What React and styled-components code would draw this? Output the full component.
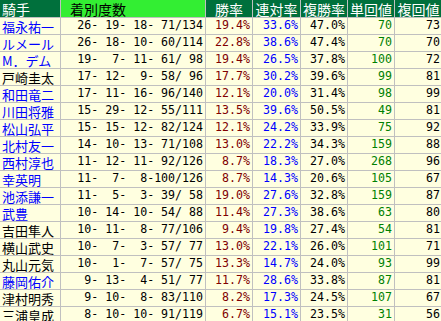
import React from "react";
import styled, { createGlobalStyle } from "styled-components";

const rows = [
  ["福永祐一", true, 26, 19, 18, 71, 134, "19.4", "33.6", "47.0", 70, 73],
  ["ルメール", true, 26, 18, 10, 60, 114, "22.8", "38.6", "47.4", 70, 70],
  ["M．デム", true, 19, 7, 11, 61, 98, "19.4", "26.5", "37.8", 100, 72],
  ["戸崎圭太", false, 17, 12, 9, 58, 96, "17.7", "30.2", "39.6", 99, 81],
  ["和田竜二", true, 17, 11, 16, 96, 140, "12.1", "20.0", "31.4", 98, 99],
  ["川田将雅", true, 15, 29, 12, 55, 111, "13.5", "39.6", "50.5", 49, 81],
  ["松山弘平", true, 15, 15, 12, 82, 124, "12.1", "24.2", "33.9", 75, 92],
  ["北村友一", true, 14, 10, 13, 71, 108, "13.0", "22.2", "34.3", 159, 88],
  ["西村淳也", true, 11, 12, 11, 92, 126, "8.7", "18.3", "27.0", 268, 96],
  ["幸英明", true, 11, 7, 8, 100, 126, "8.7", "14.3", "20.6", 105, 67],
  ["池添謙一", true, 11, 5, 3, 39, 58, "19.0", "27.6", "32.8", 159, 87],
  ["武豊", true, 10, 14, 10, 54, 88, "11.4", "27.3", "38.6", 63, 80],
  ["吉田隼人", false, 10, 11, 8, 77, 106, "9.4", "19.8", "27.4", 54, 81],
  ["横山武史", false, 10, 7, 3, 57, 77, "13.0", "22.1", "26.0", 101, 71],
  ["丸山元気", false, 10, 1, 7, 57, 75, "13.3", "14.7", "24.0", 93, 99],
  ["藤岡佑介", true, 9, 13, 4, 51, 77, "11.7", "28.6", "33.8", 87, 81],
  ["津村明秀", false, 9, 10, 8, 83, 110, "8.2", "17.3", "24.5", 107, 67],
  ["三浦皇成", false, 8, 10, 10, 91, 119, "6.7", "15.1", "23.5", 31, 56],
];

const pad = (n, w) => String(n).padStart(w, " ");
const record = (a, b, c, d, t) =>
  `${pad(a, 2)}- ${pad(b, 2)}- ${pad(c, 2)}-${pad(d, 3)}/${pad(t, 3)}`;

const GlobalStyle = createGlobalStyle`
  body {
    margin: 0;
    background: #ffffff;
    overflow: hidden;
  }
`;

const Table = styled.div`
  display: grid;
  grid-template-columns: 60px 144px 46px 47px 46px 46px 47px;
  grid-template-rows: 17px;
  grid-auto-rows: 16px;
  gap: 1px;
  background: #c0c0c0;
  width: 442px;
`;

const Head = styled.div`
  display: flex;
  align-items: center;
  justify-content: ${(p) => (p.$left ? "flex-start" : "center")};
  padding-left: ${(p) => p.$indent || 0}px;
  background: ${(p) => (p.$lime ? "#33ee33" : "#00703c")};
  color: ${(p) => (p.$lime ? "#000000" : "#ffffff")};
  font-family: "Noto Sans CJK JP", sans-serif;
  font-size: 14px;
  line-height: 1;
  white-space: nowrap;
`;

const Name = styled.div`
  display: flex;
  align-items: center;
  padding-left: 2px;
  background: #ffffe0;
  color: ${(p) => (p.$link ? "#0000ff" : "#000000")};
  font-family: "Noto Sans CJK JP", sans-serif;
  font-size: 13px;
  line-height: 1;
  white-space: nowrap;
`;

const Num = styled.div`
  display: flex;
  align-items: center;
  justify-content: flex-end;
  padding-right: 2px;
  background: #ffffe0;
  color: ${(p) => p.$color || "#000000"};
  font-family: "DejaVu Sans Mono", "Liberation Mono", monospace;
  font-size: 11.6px;
  line-height: 1;
  white-space: pre;
`;

export default function App() {
  return (
    <>
      <GlobalStyle />
      <Table>
        <Head $left $indent={2}>騎手</Head>
        <Head $left $lime $indent={9}>着別度数</Head>
        <Head>勝率</Head>
        <Head>連対率</Head>
        <Head>複勝率</Head>
        <Head>単回値</Head>
        <Head>複回値</Head>
        {rows.map((r) => (
          <React.Fragment key={r[0]}>
            <Name $link={r[1]}>{r[0]}</Name>
            <Num>{record(r[2], r[3], r[4], r[5], r[6])}</Num>
            <Num $color="#800000">{r[7]}%</Num>
            <Num $color="#0000ff">{r[8]}%</Num>
            <Num>{r[9]}%</Num>
            <Num $color="#008000">{r[10]}</Num>
            <Num>{r[11]}</Num>
          </React.Fragment>
        ))}
      </Table>
    </>
  );
}
